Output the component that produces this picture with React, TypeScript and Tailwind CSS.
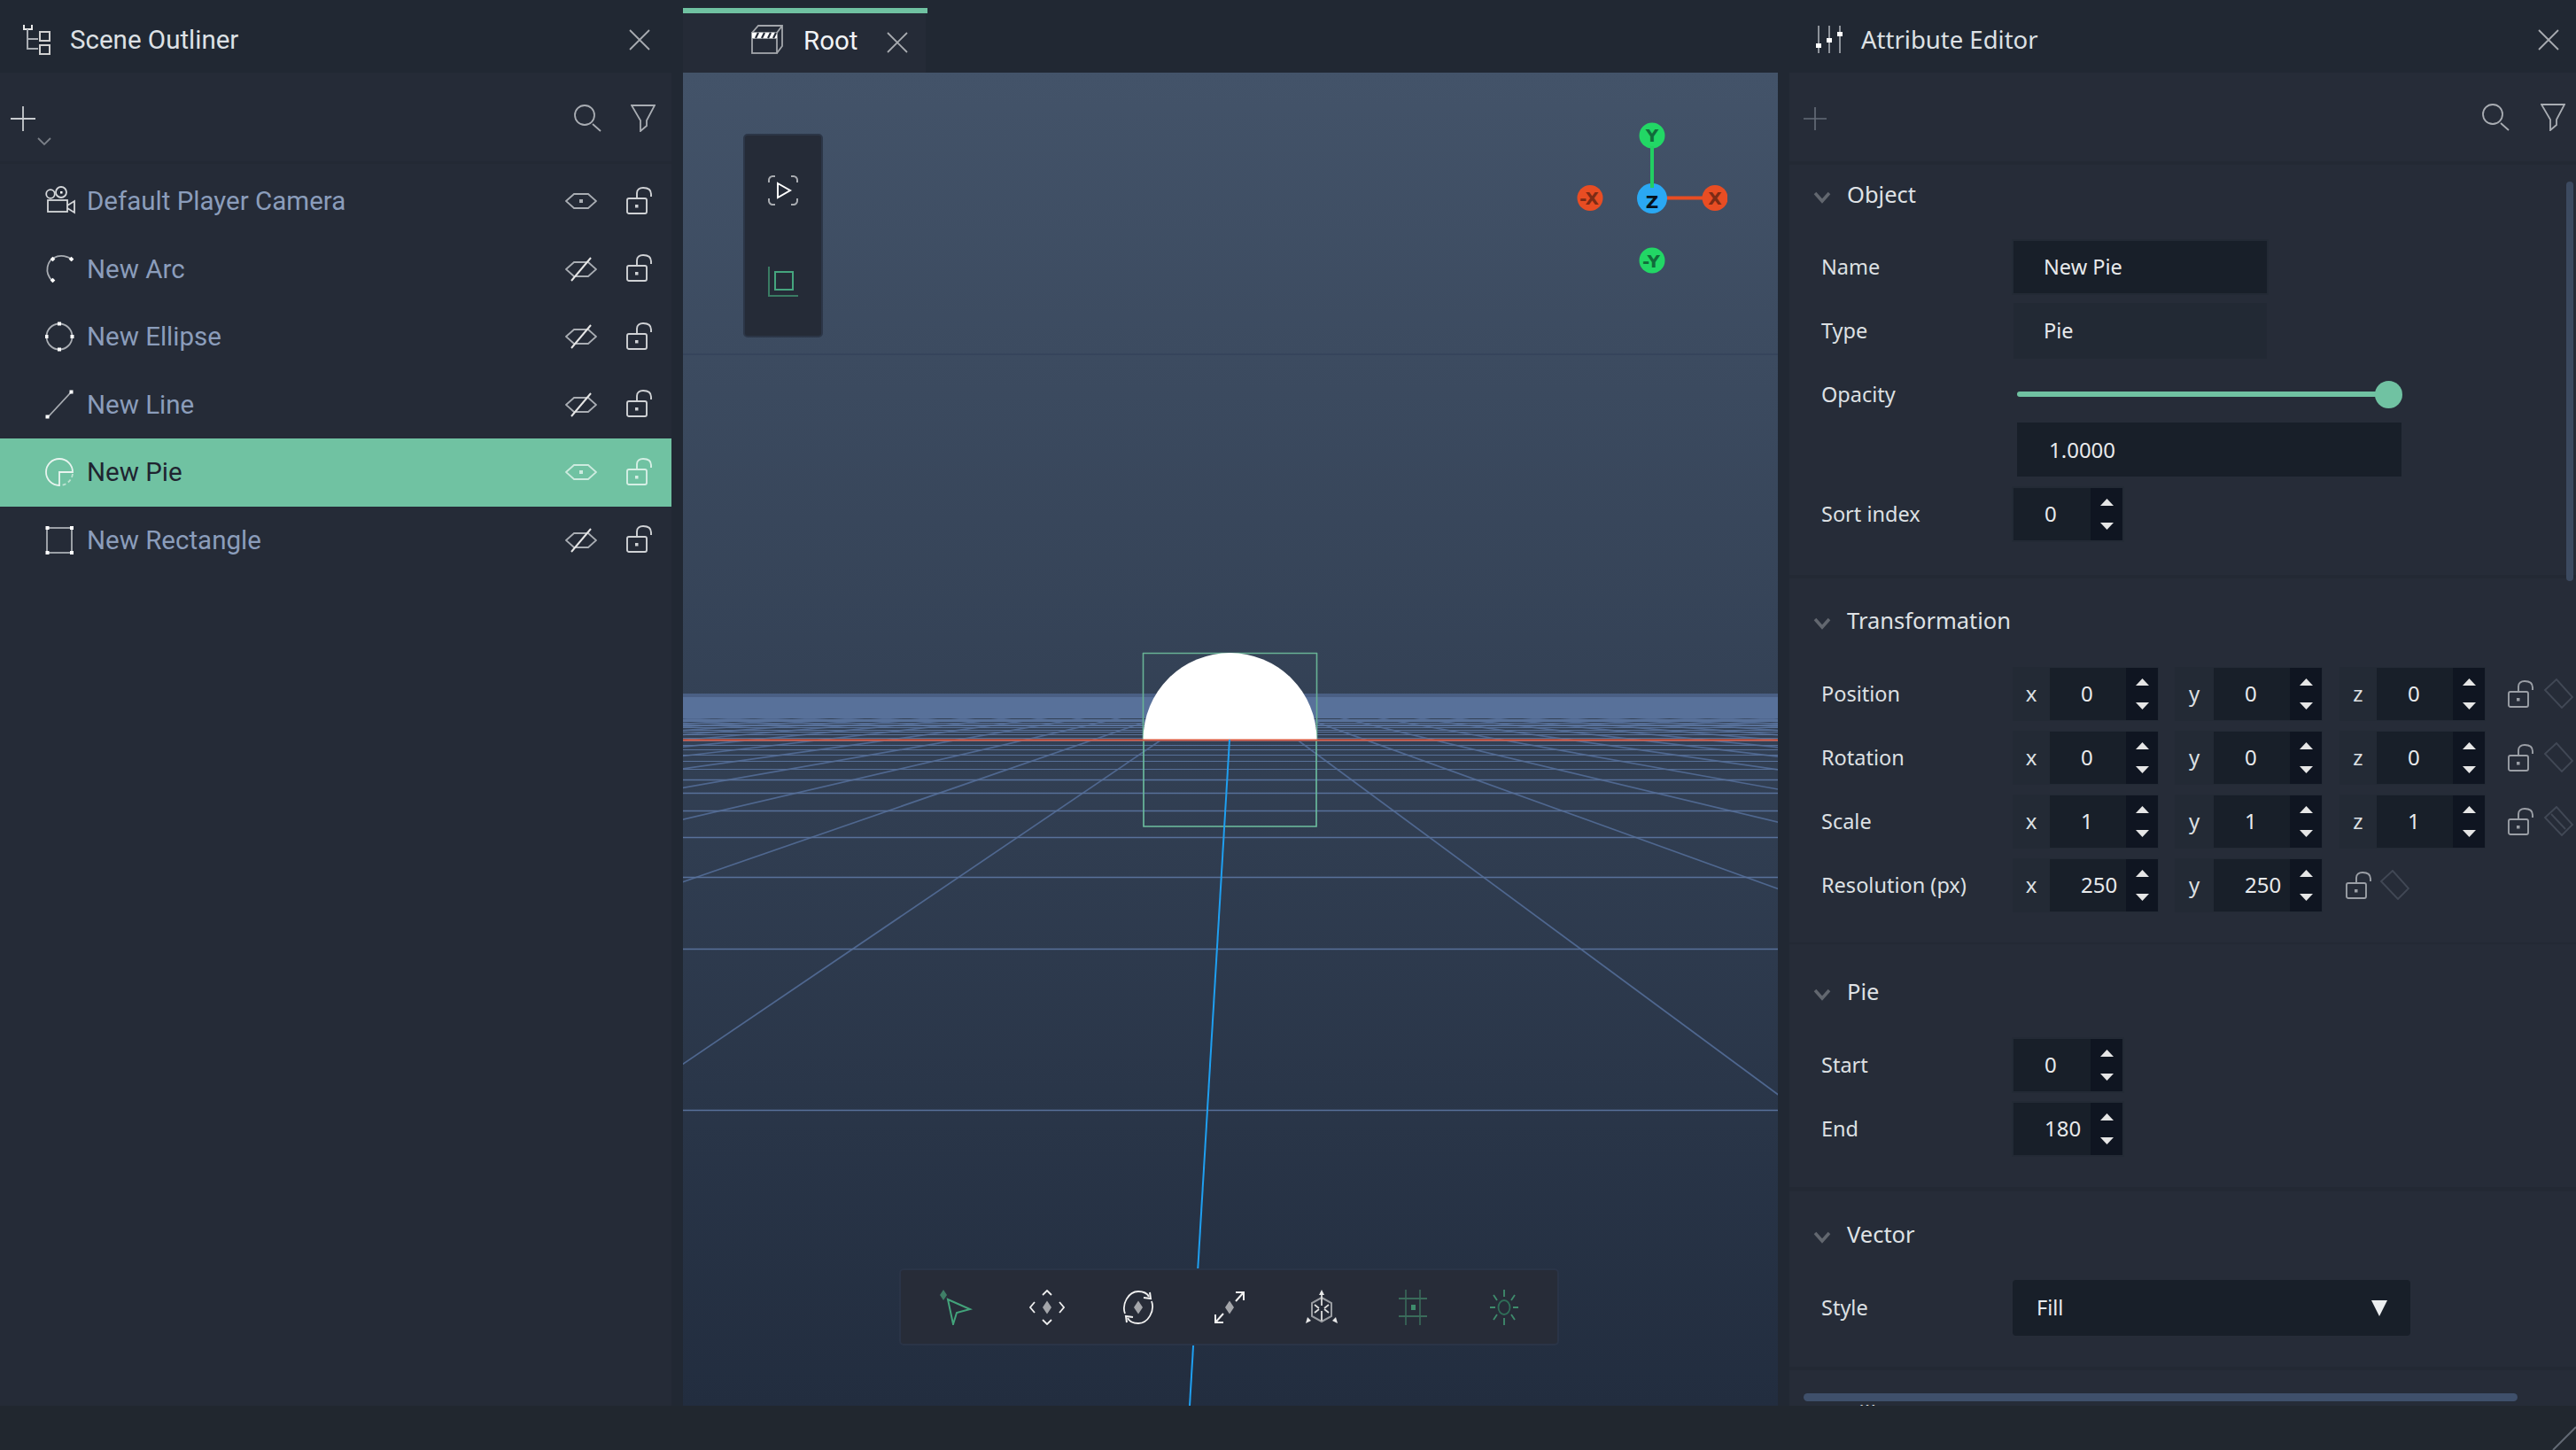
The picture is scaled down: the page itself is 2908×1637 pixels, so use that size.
import React from "react";

const G = "#a9adb3";

const CloseIcon = ({ s = 24 }: { s?: number }) => (
  <svg width={s} height={s} viewBox="0 0 24 24" fill="none" stroke="#a8abb0" strokeWidth="1.8">
    <path d="M1 1L23 23M23 1L1 23" />
  </svg>
);

const OutlinerIcon = () => (
  <svg width="32" height="36" viewBox="0 0 32 36" fill="none" strokeWidth="2">
    <path d="M1 1V6H10V1" stroke="#e8e8e8" />
    <path d="M5 6V28H17M5 17H17" stroke={G} />
    <rect x="19" y="9" width="11" height="10" stroke="#d0d0d0" />
    <rect x="19" y="24" width="11" height="10" stroke="#d0d0d0" />
  </svg>
);

const SlidersIcon = () => (
  <svg width="30" height="32" viewBox="0 0 30 32" fill="none" strokeWidth="1.6">
    <path d="M3 0V31M15 0V31M27 0V31" stroke={G} />
    <rect x="0" y="20" width="6" height="5" fill="#fff" />
    <rect x="12" y="14" width="6" height="5" fill="#fff" />
    <rect x="24" y="7" width="6" height="5" fill="#fff" />
  </svg>
);

const PlusIcon = ({ s = 28, c = "#c8cbcf" }: { s?: number; c?: string }) => (
  <svg width={s} height={s} viewBox="0 0 28 28" fill="none" stroke={c} strokeWidth="1.8">
    <path d="M14 0V28M0 14H28" />
  </svg>
);

const SearchIcon = () => (
  <svg width="31" height="31" viewBox="0 0 31 31" fill="none" stroke={G} strokeWidth="1.8">
    <circle cx="12" cy="12" r="11" />
    <path d="M21 22L30 30" />
  </svg>
);

const FilterIcon = () => (
  <svg width="28" height="31" viewBox="0 0 28 31" fill="none" stroke={G} strokeWidth="1.8">
    <path d="M1 1H27L18 18V24L11 30V18Z" />
  </svg>
);

const EyeIcon = ({ off, c = G }: { off?: boolean; c?: string }) => (
  <svg width="36" height="28" viewBox="0 0 36 28" fill="none" strokeWidth="1.8">
    <path d="M1 14L10 6H26L35 14L26 22H10Z" stroke={c} />
    {off ? (
      <path d="M7 27L29 1" stroke="#e6e6e6" strokeWidth="2" />
    ) : (
      <rect x="16" y="12" width="4" height="4" fill={c} />
    )}
  </svg>
);

const LockIcon = ({ c = "#b5b8bd" }: { c?: string }) => (
  <svg width="29" height="31" viewBox="0 0 29 31" fill="none" stroke={c} strokeWidth="1.9">
    <rect x="1" y="13" width="22" height="17" rx="2" />
    <path d="M12 13V7C12 3 15 1 19 1C24 1 28 3 28 8V11" />
    <rect x="10" y="20" width="3.5" height="3.5" fill={c} stroke="none" />
  </svg>
);

const LinkIcon = ({ mid }: { mid?: boolean }) => (
  <svg width="34" height="34" viewBox="0 0 34 34" fill="none" stroke="#414855" strokeWidth="1.9">
    <path d="M15 1L2 13L21 33L33 21Z" />
    {mid && <path d="M9 9L25 26" />}
  </svg>
);

const Cam = () => (
  <svg width="34" height="34" viewBox="0 0 34 34" fill="none" stroke="#d5d7da" strokeWidth="1.8">
    <circle cx="6" cy="9" r="4.8" />
    <circle cx="18" cy="7" r="6" />
    <rect x="17" y="6" width="2.5" height="2.5" fill="#fff" stroke="none" />
    <rect x="3" y="16" width="22" height="13" />
    <path d="M25 22L33 17V30L25 25" />
  </svg>
);

const Arc = () => (
  <svg width="34" height="34" viewBox="0 0 34 34" fill="none">
    <path d="M8 30C-2 20 3 7 10 4C17 0 26 2 31 7" stroke={G} strokeWidth="1.8" />
    <rect x="6.5" y="27.5" width="4" height="4" fill="#fff" transform="rotate(45 8.5 29.5)" />
    <rect x="6.5" y="3.5" width="4" height="4" fill="#fff" transform="rotate(45 8.5 5.5)" />
    <rect x="27.5" y="3.5" width="4" height="4" fill="#fff" transform="rotate(45 29.5 5.5)" />
  </svg>
);

const Ell = () => (
  <svg width="34" height="34" viewBox="0 0 34 34" fill="none">
    <circle cx="16" cy="17" r="14.5" stroke={G} strokeWidth="1.8" />
    <rect x="14" y="0.5" width="4" height="4" fill="#fff" />
    <rect x="14" y="29.5" width="4" height="4" fill="#fff" />
    <rect x="-0.5" y="15" width="4" height="4" fill="#fff" />
    <rect x="28.5" y="15" width="4" height="4" fill="#fff" />
  </svg>
);

const Line = () => (
  <svg width="34" height="34" viewBox="0 0 34 34" fill="none">
    <path d="M3 31L29 3" stroke={G} strokeWidth="1.8" />
    <rect x="0.5" y="28.5" width="4" height="4" fill="#fff" />
    <rect x="27.5" y="0.5" width="4" height="4" fill="#fff" />
  </svg>
);

const Pie = () => (
  <svg width="34" height="34" viewBox="0 0 34 34" fill="none">
    <path d="M16 32A15 15 0 1 1 31 17H16Z" stroke="#e8f4ef" strokeWidth="1.8" />
    <path d="M31 19A15 15 0 0 1 18 32" stroke="#bfe3d3" strokeWidth="1.8" strokeDasharray="4 3" />
  </svg>
);

const Rect = () => (
  <svg width="34" height="34" viewBox="0 0 34 34" fill="none">
    <rect x="2" y="3" width="28" height="28" stroke={G} strokeWidth="1.8" />
    <rect x="0.5" y="1" width="4" height="4" fill="#fff" />
    <rect x="28" y="1" width="4" height="4" fill="#fff" />
    <rect x="0.5" y="29" width="4" height="4" fill="#fff" />
    <rect x="28" y="29" width="4" height="4" fill="#fff" />
  </svg>
);

const Clapper = () => (
  <svg width="37" height="33" viewBox="0 0 37 33" fill="none" stroke="#a3a6ab" strokeWidth="1.8">
    <rect x="1" y="9" width="28" height="23" />
    <path d="M1 9L8 1H35V24L29 32M29 9L35 1" />
    <path d="M1 15H29" />
    <rect x="1" y="9" width="28" height="6" fill="#fff" stroke="none" />
    <path d="M5 15L8 9M12 15L15 9M19 15L22 9M25 15L28 9" stroke="#252b37" strokeWidth="2.2" />
  </svg>
);

const Dia = ({ x, y, c = "#a4a6aa", w = 5, h = 7.5 }: { x: number; y: number; c?: string; w?: number; h?: number }) => (
  <path d={`M${x} ${y - h}L${x + w} ${y}L${x} ${y + h}L${x - w} ${y}Z`} fill={c} />
);

const ToolIcon = ({ children }: { children: React.ReactNode }) => (
  <svg width="40" height="40" viewBox="0 0 40 40" fill="none">
    {children}
  </svg>
);

const tools = [
  <ToolIcon key="1">
    <Dia x={6} y={6} c="#3f7e66" w={4} h={6} />
    <path d="M11 11L36 22L21 26L17 39Z" stroke="#43a37b" strokeWidth="2" />
  </ToolIcon>,
  <ToolIcon key="2">
    <Dia x={20} y={20} />
    <path d="M15 6L20 1L25 6M15 34L20 39L25 34M6 14L1 20L6 26M34 14L39 20L34 26" stroke="#eee" strokeWidth="1.8" />
  </ToolIcon>,
  <ToolIcon key="3">
    <Dia x={20} y={20} />
    <path d="M5 27C1 16 9 2 20 2C25 2 30 4 32 8M35 13C39 24 31 38 20 38C15 38 10 36 8 32" stroke="#f0f0f0" strokeWidth="1.8" />
    <path d="M26 9L34 10L33 3" stroke="#f0f0f0" strokeWidth="2" />
    <path d="M14 31L6 30L7 37" stroke="#f0f0f0" strokeWidth="2" />
  </ToolIcon>,
  <ToolIcon key="4">
    <Dia x={20} y={20} />
    <path d="M27 13L36 3M13 27L4 37" stroke="#f0f0f0" strokeWidth="2" />
    <path d="M27 3H36V12M4 28V37H13" stroke="#f0f0f0" strokeWidth="2" />
  </ToolIcon>,
  <ToolIcon key="5">
    <path d="M20 9L31 15V30L20 36L9 30V15Z" stroke="#9a9da2" strokeWidth="2" />
    <path d="M20 0L23 6H17ZM2 38L4 31L8 35ZM38 38L32 35L36 31Z" fill="#e8e8e8" />
    <path d="M20 6V18M12 26L17 22M28 26L23 22M12 17L17 21M28 17L23 21M20 24V35" stroke="#ddd" strokeWidth="1.8" />
  </ToolIcon>,
  <ToolIcon key="6">
    <path d="M12 0V40M28 0V40" stroke="#3a6b5a" strokeWidth="1.6" />
    <path d="M4 10H36M4 30H36" stroke="#3a6b5a" strokeWidth="2.2" />
    <rect x="18" y="17" width="5" height="6" fill="#3f8c6d" />
  </ToolIcon>,
  <ToolIcon key="7">
    <ellipse cx="20" cy="20" rx="6.5" ry="8" stroke="#2f6e58" strokeWidth="1.8" />
    <path d="M20 0V8M20 32V40M4 20H10M30 20H36M8 6L12 12M32 6L28 12M8 34L12 28M32 34L28 28" stroke="#3f8c6d" strokeWidth="1.8" />
  </ToolIcon>,
];

const rows = [
  { name: "Default Player Camera", icon: <Cam />, visible: true },
  { name: "New Arc", icon: <Arc />, visible: false },
  { name: "New Ellipse", icon: <Ell />, visible: false },
  { name: "New Line", icon: <Line />, visible: false },
  { name: "New Pie", icon: <Pie />, visible: true, selected: true },
  { name: "New Rectangle", icon: <Rect />, visible: false },
];

const Outliner = () => (
  <aside className="w-[758px] flex flex-col shrink-0">
    <header className="h-[82px] bg-[#212833] flex items-center relative pl-[26px] pr-[24px] pt-[8px]">
      <OutlinerIcon />
      <span className="ml-[21px] text-[29.5px] text-[#dde1e5] font-['Roboto',sans-serif]">Scene Outliner</span>
      <span className="ml-auto flex">
        <CloseIcon />
      </span>
    </header>
    <div className="flex-1 bg-[#252b37] flex flex-col">
      <div className="h-[103px] flex items-center pl-[12px] pr-[18px] pt-[3px] border-b-[3px] border-[#232934] relative">
        <PlusIcon />
        <svg className="absolute left-[42px] top-[73px]" width="16" height="10" viewBox="0 0 16 10" fill="none" stroke="#7a7f87" strokeWidth="1.8">
          <path d="M1 1L8 8L15 1" />
        </svg>
        <span className="ml-auto flex items-center gap-[33px]">
          <SearchIcon />
          <FilterIcon />
        </span>
      </div>
      <div className="pt-[4px] flex flex-col">
        {rows.map((r) => (
          <div
            key={r.name}
            className={
              r.selected
                ? "h-[76.5px] flex items-center pl-[51px] pr-[22px] bg-[#70c2a2] text-[#1f2430]"
                : "h-[76.5px] flex items-center pl-[51px] pr-[22px] text-[#8b9dbb]"
            }
          >
            <span className="w-[34px] flex">{r.icon}</span>
            <span className="ml-[13px] text-[29.5px] font-['Roboto',sans-serif]">{r.name}</span>
            <span className="ml-auto flex items-center gap-[33px]">
              <EyeIcon off={!r.visible} c={r.selected ? "#cdebdf" : G} />
              <span className="flex -mt-[2px]">
                <LockIcon c={r.selected ? "#d6efe5" : "#d0d2d5"} />
              </span>
            </span>
          </div>
        ))}
      </div>
    </div>
  </aside>
);

/* perspective floor of the viewport */
const VPX = 1391;
const HOR = 781;
const floorY: number[] = [];
for (let i = 0; i < 400; i++) floorY.push(HOR + 1 / (0.00212 + 0.00133 * i));
const floorN: number[] = [];
for (let n = -70; n <= 70; n++) floorN.push(n);

const Floor = () => (
  <svg className="absolute inset-0" width="1236" height="1505" viewBox="771 82 1236 1505" fill="none">
    <path d="M771 400H2007" stroke="#35425a" strokeWidth="1.5" />
    {floorN.map((n) => {
      if (n === 0) return null;
      const k = -0.06 + 1.415 * n;
      return <path key={n} d={`M${VPX + k * 9} 790L${VPX + k * 806} 1587`} stroke="#4f678f" strokeWidth="1.7" />;
    })}
    {floorY.map((y, i) => (
      <path
        key={i}
        d={`M771 ${Math.round(y) + 0.5}H2007`}
        stroke={y < 786 ? "#4a5f84" : "#58719a"}
        strokeWidth={y > 880 ? 1.6 : 1}
      />
    ))}
    <path d="M1290 737.5H1487" stroke="#68b295" strokeWidth="1.6" />
    <path d="M1290.5 737V835M1486.5 737V835" stroke="#68b295" strokeWidth="1.6" />
    <path d="M1290.5 835A98 98 0 0 1 1486.5 835Z" fill="#fff" />
    <path d="M1291 835V933H1486V835" stroke="#6dc0a0" strokeWidth="1.6" />
    <path d="M771 835.5H2007" stroke="#d9573c" strokeWidth="2" />
    <path d="M1388 835L1343 1587" stroke="#1f9ff0" strokeWidth="2" />
  </svg>
);

const Gizmo = () => (
  <svg className="absolute left-[1009px] top-[34px]" width="170" height="210" viewBox="1780 116 170 210" fill="none">
    <path d="M1875 223.5H1925" stroke="#e84d23" strokeWidth="4" />
    <circle cx="1865" cy="153" r="14.5" fill="#22d765" />
    <circle cx="1865" cy="224" r="17" fill="#2aa8f3" />
    <path d="M1865 165V212" stroke="#22cf62" strokeWidth="4" />
    <circle cx="1936" cy="223.5" r="14.5" fill="#e84d23" />
    <circle cx="1795" cy="223.5" r="14.5" fill="#e84d23" />
    <circle cx="1865" cy="294" r="14.5" fill="#22d765" />
    <g fontFamily="'DejaVu Sans',sans-serif" fontWeight="700" fontSize="20" textAnchor="middle">
      <text x="1865" y="160" fill="#116b3a">Y</text>
      <text x="1865" y="235" fill="#06121c">Z</text>
      <text x="1936" y="231" fill="#7c2b15">X</text>
      <text x="1794" y="231" fill="#7c2b15">-X</text>
      <text x="1864" y="302" fill="#116b3a">-Y</text>
    </g>
  </svg>
);

const Viewport = () => (
  <main className="w-[1236px] ml-[13px] mr-[13px] shrink-0 flex flex-col">
    <div className="h-[82px] bg-[#212833] flex flex-col">
      <div className="w-[276px] h-[82px] flex flex-col">
        <div className="mt-[9px] h-[6px] bg-[#70c2a2]" />
        <div className="flex-1 w-[274px] bg-[#252b37] flex items-center pl-[77px]">
          <span className="flex -mt-[8px]">
            <Clapper />
          </span>
          <span className="ml-[22px] -mt-[4px] text-[29.5px] text-[#f2f4f6] font-['Roboto',sans-serif]">Root</span>
          <span className="ml-[33px] -mt-[2px] flex">
            <CloseIcon />
          </span>
        </div>
      </div>
    </div>
    <div className="flex-1 relative overflow-hidden bg-[linear-gradient(180deg,#435369_0%,#222d3f_100%)]">
      <Floor />
      <Gizmo />
      <div className="absolute left-[68px] top-[69px] w-[90px] h-[230px] rounded-[5px] bg-[#252b37] border-2 border-[#2c3647] flex flex-col items-center">
        <svg className="mt-[45px]" width="34" height="34" viewBox="0 0 34 34" fill="none">
          <path d="M1 8V5C1 3 3 1 5 1H8M26 1H29C31 1 33 3 33 5V8M33 26V29C33 31 31 33 29 33H26M8 33H5C3 33 1 31 1 29V26" stroke="#a8abb0" strokeWidth="2" />
          <path d="M11 9L25 17L11 25Z" stroke="#fff" strokeWidth="2" />
        </svg>
        <svg className="mt-[69px]" width="34" height="34" viewBox="0 0 34 34" fill="none">
          <path d="M1 0V33H34" stroke="#3a7b63" strokeWidth="2" />
          <rect x="8" y="6" width="20" height="20" stroke="#45a57e" strokeWidth="2" />
        </svg>
      </div>
      <div className="absolute left-[244px] top-[1350px] w-[745px] h-[87px] rounded-[5px] bg-[#272c38] border-2 border-[#2a3447] flex items-center justify-between pl-[42px] pr-[40px]">
        {tools}
      </div>
    </div>
  </main>
);

const sans = "font-['Noto_Sans',sans-serif]";

const Chevron = () => (
  <svg width="20" height="14" viewBox="0 0 20 14" fill="none" stroke="#62676f" strokeWidth="3.5" className="mt-[5px]">
    <path d="M2 2L10 11L18 2" />
  </svg>
);

const SectionHead = ({ title }: { title: string }) => (
  <div className="h-[40px] flex items-center pl-[27px]">
    <Chevron />
    <span className={`ml-[18px] -mt-[1px] text-[25.5px] text-[#dfe2e5] ${sans}`}>{title}</span>
  </div>
);

const Label = ({ children }: { children: React.ReactNode }) => (
  <span className={`w-[216px] shrink-0 pt-[1px] text-[23.5px] text-[#dde0e3] ${sans}`}>{children}</span>
);

const Spin = () => (
  <span className="w-[36px] h-full bg-[#0f1521] flex flex-col items-center justify-between py-[12px]">
    <svg width="15" height="8" viewBox="0 0 15 8">
      <path d="M7.5 0L15 8H0Z" fill="#e6e6e6" />
    </svg>
    <svg width="15" height="8" viewBox="0 0 15 8">
      <path d="M0 0H15L7.5 8Z" fill="#e6e6e6" />
    </svg>
  </span>
);

const Num = ({ v }: { v: string }) => (
  <span className={`w-[86px] h-full bg-[#181f29] pl-[35px] flex items-center text-[24px] text-[#e8eaec] ${sans}`}>{v}</span>
);

const Axis = ({ l, v, w }: { l: string; v: string; w: string }) => (
  <span className="h-[61px] bg-[#232a35] flex items-center pr-[1px]">
    <span className={`${w} h-[59px] flex items-center justify-center text-[24px] text-[#dde0e3] ${sans}`}>{l}</span>
    <span className="h-[59px] flex">
      <Num v={v} />
      <Spin />
    </span>
  </span>
);

const Vec3 = ({ label, a, mid }: { label: string; a: string; mid?: boolean }) => (
  <div className="h-[72px] flex items-center pl-[36px]">
    <Label>{label}</Label>
    <Axis l="x" v={a} w="w-[42px]" />
    <span className="ml-[18px] flex">
      <Axis l="y" v={a} w="w-[44px]" />
    </span>
    <span className="ml-[19px] flex">
      <Axis l="z" v={a} w="w-[42px]" />
    </span>
    <span className="ml-[25px] flex">
      <LockIcon c="#9b9fa6" />
    </span>
    <span className="ml-[11px] flex">
      <LinkIcon mid={mid} />
    </span>
  </div>
);

const SmallNum = ({ label, v }: { label: string; v: string }) => (
  <div className="h-[72px] flex items-center pl-[36px]">
    <Label>{label}</Label>
    <span className="ml-[1px] h-[59px] w-[123px] flex outline-2 outline-[#232a35]">
      <span className={`w-[87px] h-full bg-[#181f29] pl-[35px] flex items-center text-[24px] text-[#e8eaec] ${sans}`}>{v}</span>
      <Spin />
    </span>
  </div>
);

const Attributes = () => (
  <aside className="w-[888px] shrink-0 flex flex-col">
    <header className="h-[82px] bg-[#212833] flex items-center pt-[8px]">
      <span className="ml-[30px] flex">
        <SlidersIcon />
      </span>
      <span className={`ml-[21px] text-[27.5px] text-[#dde1e5] ${sans}`}>Attribute Editor</span>
      <span className="ml-auto mr-[19px] flex">
        <CloseIcon />
      </span>
    </header>
    <div className="flex-1 bg-[#232934] relative overflow-hidden flex flex-col">
      <div className="h-[100px] shrink-0 bg-[#262c38] flex items-center pl-[16px] pr-[12px] pt-[3px]">
        <PlusIcon s={26} c="#646b77" />
        <span className="ml-auto flex items-center gap-[35px] -mt-[2px]">
          <SearchIcon />
          <FilterIcon />
        </span>
      </div>
      <section className="mt-[4px] bg-[#262c38] pt-[14px] pb-[33px]">
        <SectionHead title="Object" />
        <div className="mt-[25px]">
          <div className="h-[72px] flex items-center pl-[36px]">
            <Label>Name</Label>
            <span className={`ml-[1px] w-[286px] h-[59px] bg-[#181f29] outline-2 outline-[#232a35] pl-[34px] pt-[1px] flex items-center text-[23.5px] text-[#e8eaec] ${sans}`}>New Pie</span>
          </div>
          <div className="h-[72px] flex items-center pl-[36px]">
            <Label>Type</Label>
            <span className={`ml-[1px] w-[286px] h-[63px] bg-[#222934] pl-[34px] pt-[1px] flex items-center text-[23.5px] text-[#e8eaec] ${sans}`}>Pie</span>
          </div>
          <div className="h-[72px] flex items-center pl-[36px]">
            <Label>Opacity</Label>
            <span className="ml-[5px] w-[435px] relative flex items-center">
              <span className="w-[420px] h-[6px] rounded-full bg-[#70c2a2]" />
              <span className="absolute right-0 w-[31px] h-[31px] rounded-full bg-[#70c2a2]" />
            </span>
          </div>
          <div className="h-[61px] -mt-[4px] flex items-center pl-[257px]">
            <span className={`w-[434px] h-[61px] bg-[#181f29] pl-[36px] flex items-center text-[24px] text-[#e8eaec] ${sans}`}>1.0000</span>
          </div>
          <div className="mt-[6px]">
            <SmallNum label="Sort index" v="0" />
          </div>
        </div>
      </section>
      <section className="mt-[4px] bg-[#262c38] pt-[28px] pb-[29px]">
        <SectionHead title="Transformation" />
        <div className="mt-[26px]">
          <Vec3 label="Position" a="0" />
          <Vec3 label="Rotation" a="0" />
          <Vec3 label="Scale" a="1" mid />
          <div className="h-[72px] flex items-center pl-[36px]">
            <Label>Resolution (px)</Label>
            <Axis l="x" v="250" w="w-[42px]" />
            <span className="ml-[18px] flex">
              <Axis l="y" v="250" w="w-[44px]" />
            </span>
            <span className="ml-[26px] flex">
              <LockIcon c="#9b9fa6" />
            </span>
            <span className="ml-[9px] flex">
              <LinkIcon />
            </span>
          </div>
        </div>
      </section>
      <section className="mt-[2px] bg-[#262c38] pt-[34px] pb-[30px]">
        <SectionHead title="Pie" />
        <div className="mt-[26px]">
          <SmallNum label="Start" v="0" />
          <SmallNum label="End" v="180" />
        </div>
      </section>
      <section className="mt-[5px] bg-[#262c38] pt-[29px] pb-[31px]">
        <SectionHead title="Vector" />
        <div className="mt-[26px] h-[72px] flex items-center pl-[36px]">
          <Label>Style</Label>
          <span className={`w-[449px] h-[63px] rounded-[4px] bg-[#181f29] pl-[27px] pr-[26px] pt-[1px] flex items-center justify-between text-[23.5px] text-[#e8eaec] ${sans}`}>
            Fill
            <svg width="18" height="18" viewBox="0 0 18 18">
              <path d="M0 0H18L9 18Z" fill="#eceef0" />
            </svg>
          </span>
        </div>
      </section>
      <section className="mt-[4px] flex-1 bg-[#262c38] pt-[29px]">
        <SectionHead title="Fill" />
      </section>
      <span className="absolute right-[3px] top-[123px] w-[8px] h-[451px] rounded-full bg-[#3c4a60]" />
      <span className="absolute left-[16px] top-[1491px] w-[806px] h-[9px] rounded-full bg-[#3f506b]" />
    </div>
  </aside>
);

export default function App() {
  return (
    <div className="w-[2908px] h-[1637px] overflow-hidden bg-[#21272f] flex flex-col relative">
      <div className="h-[1587px] flex shrink-0 bg-[#212833]">
        <Outliner />
        <Viewport />
        <Attributes />
      </div>
      <div className="flex-1 bg-[#21272f] flex justify-end items-end">
        <svg width="30" height="30" viewBox="0 0 30 30" fill="none" stroke="#636a75" strokeWidth="2">
          <path d="M4 30L30 4" />
        </svg>
      </div>
    </div>
  );
}
